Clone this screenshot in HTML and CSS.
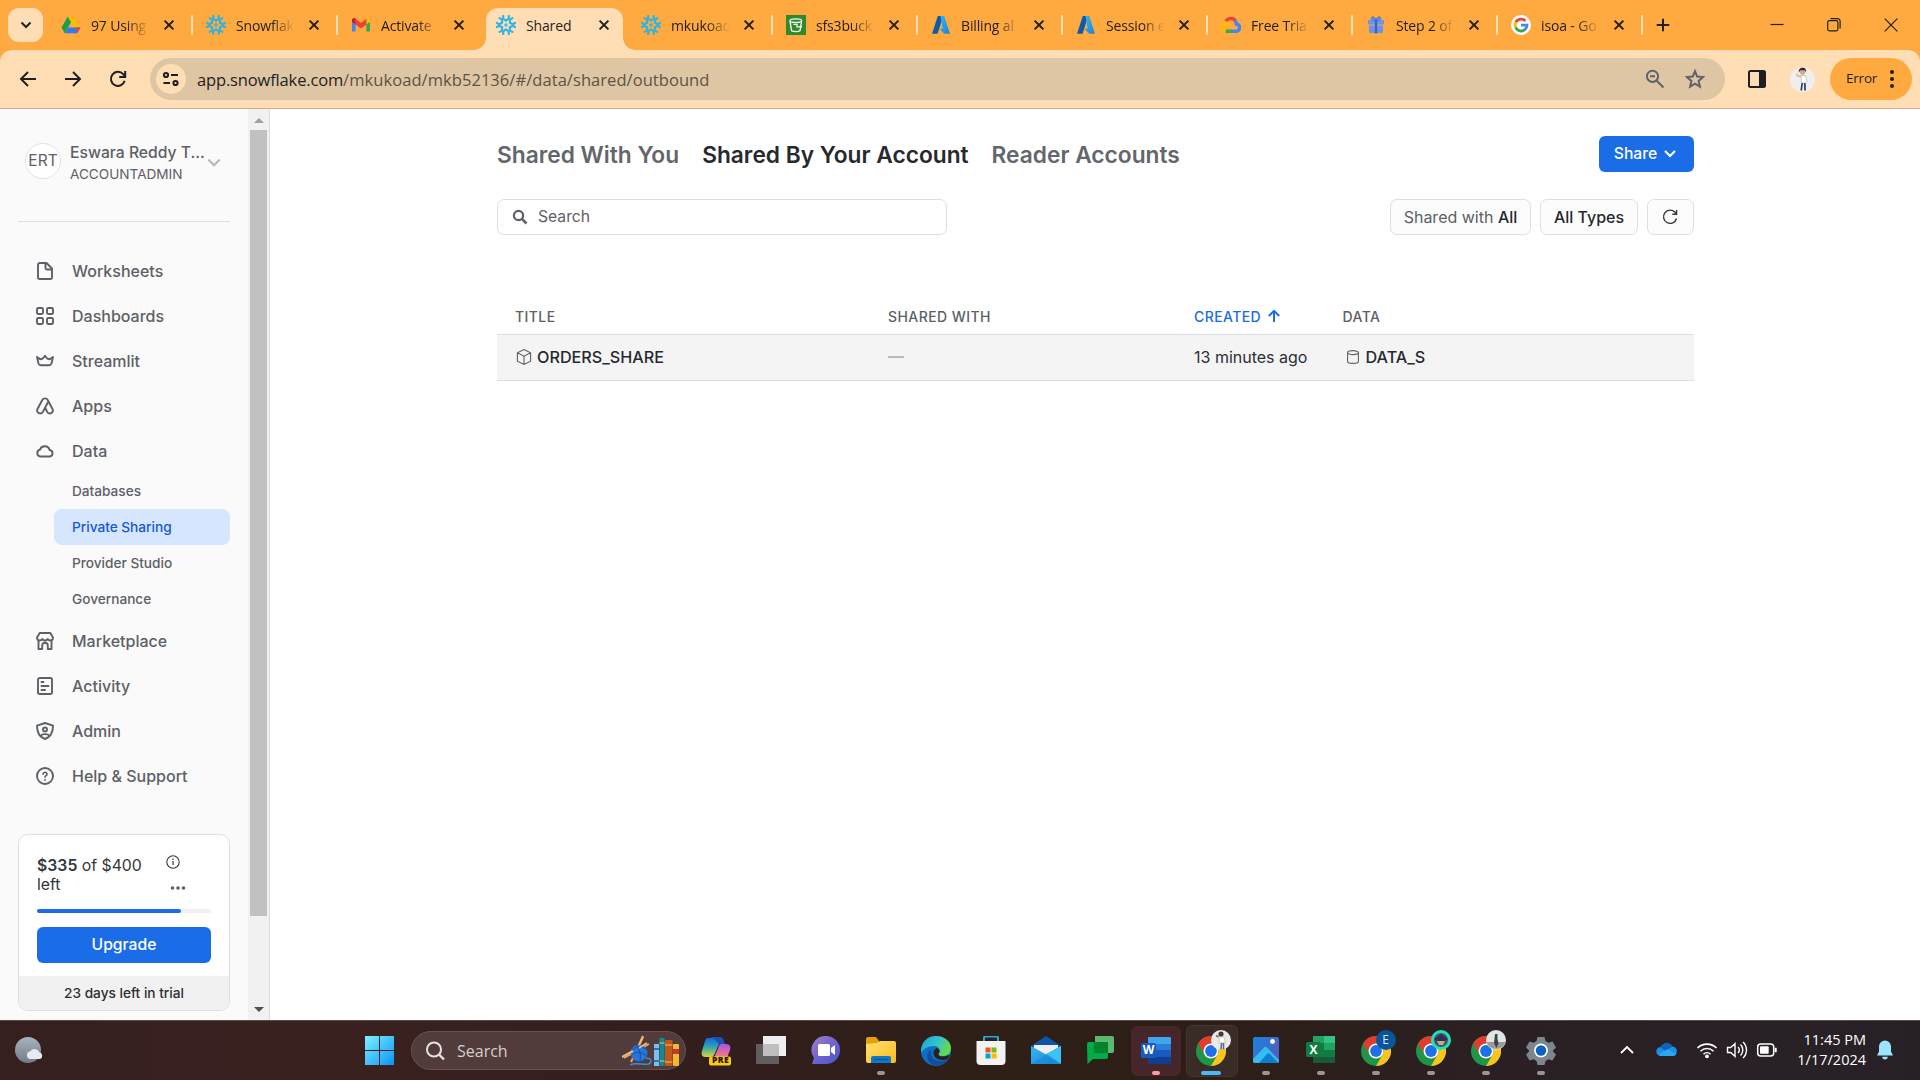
FILE: index.html
```html
<!DOCTYPE html>
<html lang="en">
<head>
<meta charset="utf-8">
<title>Shared</title>
<link rel="stylesheet" href="styles.css">
</head>
<body>
<svg class="sprite" width="0" height="0" aria-hidden="true">
  <defs>
    <linearGradient id="g-win" x1="0" y1="0" x2="1" y2="1"><stop offset="0" stop-color="#7df0ff"/><stop offset="1" stop-color="#0a95f5"/></linearGradient>
    <linearGradient id="g-chat" x1="0" y1="0" x2="1" y2="1"><stop offset="0" stop-color="#a57fc9"/><stop offset=".5" stop-color="#6f63cf"/><stop offset="1" stop-color="#4a52cf"/></linearGradient>
    <linearGradient id="g-fold" x1="0" y1="0" x2="1" y2="1"><stop offset="0" stop-color="#ffe072"/><stop offset="1" stop-color="#fcbc1c"/></linearGradient>
    <linearGradient id="g-edge" x1="0" y1="0" x2="1" y2=".4"><stop offset="0" stop-color="#1b9de2"/><stop offset=".6" stop-color="#34c6c8"/><stop offset="1" stop-color="#63dc4c"/></linearGradient>
    <linearGradient id="g-mail" x1="0" y1="0" x2="1" y2="1"><stop offset="0" stop-color="#34b5f0"/><stop offset="1" stop-color="#1b87d8"/></linearGradient>
    <linearGradient id="g-photo" x1="0" y1="0" x2="1" y2="1"><stop offset="0" stop-color="#1487e0"/><stop offset="1" stop-color="#6353b4"/></linearGradient>
    <linearGradient id="g-cop1" x1="0" y1="0" x2="0" y2="1"><stop offset="0" stop-color="#1469d8"/><stop offset=".45" stop-color="#28a5b4"/><stop offset="1" stop-color="#d9d43c"/></linearGradient>
    <linearGradient id="g-cop2" x1="0" y1="0" x2="0" y2="1"><stop offset="0" stop-color="#a953e8"/><stop offset="1" stop-color="#ff7d77"/></linearGradient>
    <linearGradient id="g-az" x1="0" y1="0" x2="1" y2="1"><stop offset="0" stop-color="#37b6f2"/><stop offset="1" stop-color="#1d83d6"/></linearGradient>
    <linearGradient id="g-moon" x1="0" y1="0" x2="0" y2="1"><stop offset="0" stop-color="#a9b3be"/><stop offset="1" stop-color="#727c88"/></linearGradient>
    <symbol id="flake" viewBox="0 0 20 20"><g stroke="#29b5e8" stroke-width="2.1" stroke-linecap="round" stroke-linejoin="round" fill="none"><path id="arm" d="M7.2 1v2.6L10 5.6l2.800-2V1"/><use href="#arm" transform="rotate(60 10 10)"/><use href="#arm" transform="rotate(120 10 10)"/><use href="#arm" transform="rotate(180 10 10)"/><use href="#arm" transform="rotate(240 10 10)"/><use href="#arm" transform="rotate(300 10 10)"/><circle cx="10" cy="10" r="1.1" stroke-width="1.2"/></g></symbol>
    <symbol id="azure" viewBox="0 0 20 20"><path d="M6.800 1h5.400L6.600 18.800H1z" fill="#0f5ba8"/><path d="M9.500 1h3.700L19 18.800h-5.600L8.400 14l3.200-.4z" fill="url(#g-az)"/></symbol>
    <symbol id="x" viewBox="0 0 16 16"><path d="M3.600 3.600l8.800 8.800M12.400 3.600l-8.800 8.800" stroke="#1f1f1f" stroke-width="2" fill="none"/></symbol>
    <symbol id="chrome" viewBox="0 0 30 30"><circle cx="15" cy="15" r="15" fill="#1e9547"/><path d="M15 0a15 15 0 0 1 13 7.500H15a7.500 7.500 0 0 0-6.500 11.250L2 7.500A15 15 0 0 1 15 0z" fill="#e33b2e"/><path d="M28 7.500A15 15 0 0 1 15 30l6.500-11.250A7.500 7.500 0 0 0 15 7.500z" fill="#fcc31d"/><circle cx="15" cy="15" r="7.500" fill="#fff"/><circle cx="15" cy="15" r="5.900" fill="#1f6fe6"/></symbol>
  </defs>
</svg>

<div class="browser">
  <header class="tabstrip">
    <button class="tab-search"><svg width="16" height="16" viewBox="0 0 16 16"><path d="M3.500 5.500L8 10l4.500-4.500" class="ink2"/></svg></button>
    <div class="tabs">
      <div class="tab"><svg class="fav" viewBox="0 0 20 20"><path d="M6.700 1.500h6.600L19.500 12.500H13z" fill="#fbbc04"/><path d="M6.700 1.500L10 7.200 3.700 18.200.5 12.500z" fill="#1e9e4a"/><path d="M7 12.500h12.500l-3.300 5.700H3.700z" fill="#2f7cf0"/><path d="M14 12.500h5.500l-3 5.200z" fill="#ea4335"/></svg><span class="tt">97 Using</span><svg class="x"><use href="#x"/></svg></div>
      <div class="tab"><svg class="fav"><use href="#flake"/></svg><span class="tt">Snowflak</span><svg class="x"><use href="#x"/></svg></div>
      <div class="tab nodiv"><svg class="fav" viewBox="0 0 20 20"><path d="M1 5v11.500h3.600V8z" fill="#4285f4"/><path d="M19 5v11.500h-3.600V8z" fill="#34a853"/><path d="M15.400 5v4.500L19 7V5c0-2-2-2.600-3.600-1.500z" fill="#fbbc04"/><path d="M4.600 9.500V3.800L10 8l5.400-4.200v5.700L10 13.600z" fill="#ea4335"/><path d="M1 5v2l3.600 2.500V3.600C3 2.400 1 3.300 1 5z" fill="#c5221f"/></svg><span class="tt">Activate</span><svg class="x"><use href="#x"/></svg></div>
      <div class="tab active nodiv"><svg class="fav"><use href="#flake"/></svg><span class="tt">Shared</span><svg class="x"><use href="#x"/></svg></div>
      <div class="tab"><svg class="fav"><use href="#flake"/></svg><span class="tt">mkukoad</span><svg class="x"><use href="#x"/></svg></div>
      <div class="tab"><svg class="fav" viewBox="0 0 20 20"><path d="M0 0h20v20H0z" fill="#2f8a2b"/><path d="M4 6.200l1.600 9.600c2 1.200 6.400 1.200 8.400 0L15.600 6.200" fill="none" stroke="#fff" stroke-width="1.300"/><ellipse cx="9.800" cy="5.700" rx="5.900" ry="1.800" fill="none" stroke="#fff" stroke-width="1.300"/><path d="M7.500 9.300h3.500v2.500h5" fill="none" stroke="#fff" stroke-width="1.200"/></svg><span class="tt">sfs3buck</span><svg class="x"><use href="#x"/></svg></div>
      <div class="tab"><svg class="fav"><use href="#azure"/></svg><span class="tt">Billing al</span><svg class="x"><use href="#x"/></svg></div>
      <div class="tab"><svg class="fav"><use href="#azure"/></svg><span class="tt">Session e</span><svg class="x"><use href="#x"/></svg></div>
      <div class="tab"><svg class="fav" viewBox="0 0 20 20"><g fill="none" stroke-width="3.400"><path d="M5 6.500A5.400 5.400 0 0 1 14.500 6" stroke="#ea4335"/><path d="M14 5.800c1 1 1.300 2 1.300 3.200a3.700 3.700 0 0 1 .2 7.300H10" stroke="#4285f4"/><path d="M10.500 16.300H5.500l-1.500-.5" stroke="#34a853"/><path d="M4.800 16.200A3.900 3.900 0 1 1 8.300 10.500" stroke="#fbbc04"/></g></svg><span class="tt">Free Tria</span><svg class="x"><use href="#x"/></svg></div>
      <div class="tab"><svg class="fav" viewBox="0 0 20 20"><path d="M2 5h16v4.500H2zM3 10.500h14V18H3z" fill="#6b94ea"/><path d="M8.800 4h2.400v14.500H8.800z" fill="#3a63c8"/><path d="M10 5C6 5.500 4.500 4 5.500 2.500S9 2 10 5c1-3 3.500-4 4.500-2.500S14 5.500 10 5z" fill="#6b94ea" stroke="#3a63c8" stroke-width=".8"/></svg><span class="tt">Step 2 of</span><svg class="x"><use href="#x"/></svg></div>
      <div class="tab"><svg class="fav" viewBox="0 0 20 20"><circle cx="10" cy="10" r="10" fill="#fff"/><g fill="none" stroke-width="2.800"><path d="M14.400 6A6 6 0 0 0 4.800 7.200" stroke="#ea4335"/><path d="M4.900 7A6.200 6.200 0 0 0 4.900 13" stroke="#fbbc04"/><path d="M4.700 12.700A6 6 0 0 0 13.800 14.700" stroke="#34a853"/><path d="M10 10.100h6A6 6 0 0 1 13.700 14.800" stroke="#4285f4"/></g></svg><span class="tt">isoa - Go</span><svg class="x"><use href="#x"/></svg></div>
    </div>
    <svg class="newtab" width="16" height="16" viewBox="0 0 16 16"><path d="M8 1.700v12.600M1.700 8h12.600" class="ink2"/></svg>
    <div class="winctl">
      <svg width="14" height="14" viewBox="0 0 14 14"><path d="M.5 6.500h13" class="thin"/></svg>
      <svg width="14" height="14" viewBox="0 0 14 14"><rect x=".7" y="2.700" width="10.200" height="10.200" rx="1.800" class="thin"/><path d="M3.500.7h7a2.500 2.500 0 0 1 2.600 2.600v7.200" class="thin"/></svg>
      <svg width="14" height="14" viewBox="0 0 14 14"><path d="M.7.700l12.600 12.600M13.300.7L.7 13.300" class="thin"/></svg>
    </div>
  </header>

  <div class="toolbar">
    <nav class="navbtns">
      <svg width="18" height="18" viewBox="0 0 18 18"><path d="M17 9H2.500M9 2L2 9l7 7" class="ink2"/></svg>
      <svg width="18" height="18" viewBox="0 0 18 18"><path d="M1 9h14.500M9 2l7 7-7 7" class="ink2"/></svg>
      <svg width="18" height="18" viewBox="0 0 18 18"><path d="M15.700 10.800A7 7 0 1 1 14.200 4.200L16 6M16.200 1v5.900h-6" class="ink2"/></svg>
    </nav>
    <div class="omnibox">
      <span class="siteinfo"><svg width="18" height="16" viewBox="0 0 18 16"><g class="ink2"><circle cx="4" cy="4" r="2.100"/><path d="M9 4h7M1.500 12H8"/><circle cx="13.500" cy="12" r="2.100"/></g></svg></span>
      <span class="url"><b>app.snowflake.com</b>/mkukoad/mkb52136/#/data/shared/outbound</span>
      <span class="omniacts">
        <svg width="20" height="20" viewBox="0 0 20 20"><g fill="none" stroke="#5f6368" stroke-width="2"><circle cx="7.500" cy="7.300" r="5.600"/><path d="M11.500 11.500l7 7M5 7.300h5"/></g></svg>
        <svg width="20" height="20" viewBox="0 0 20 20"><path d="M10 2.200l2.200 5.400 5.800.5-4.400 3.800 1.300 5.700-4.900-3-4.900 3 1.300-5.700L2 8.100l5.800-.5z" fill="none" stroke="#5f6368" stroke-width="2"/></svg>
      </span>
    </div>
    <svg class="sidepanel" width="18" height="18" viewBox="0 0 18 18"><rect x="1" y="1" width="16" height="16" rx="1.500" class="ink2"/><path d="M11 1h6v16h-6z" fill="#1f1f1f"/></svg>
    <svg class="profile" width="25" height="25" viewBox="0 0 25 25"><circle cx="12.500" cy="12.500" r="12.500" fill="#f1efee"/><circle cx="12.500" cy="5" r="2.800" fill="#d9a58a"/><path d="M8.800 5.500C8.500 2 10.500.7 12.500.7c3 0 4 2 3.300 4.500l-1-2-4.500 0z" fill="#3a2622"/><path d="M11 8.500h4.500l1.500 6.500-1.500 1h-4z" fill="#fff" stroke="#9ab5a0" stroke-width=".6"/><path d="M11 9.500L7.500 9 6.500 7" fill="none" stroke="#d9a58a" stroke-width="1.300"/><path d="M12.200 16l-1 7.500M14.800 16l.3 7.500" stroke="#25406b" stroke-width="1.700"/></svg>
    <button class="error"><span>Error</span><svg width="6" height="20" viewBox="0 0 6 20"><g fill="#1f1f1f"><circle cx="3" cy="3" r="2"/><circle cx="3" cy="10" r="2"/><circle cx="3" cy="17" r="2"/></g></svg></button>
  </div>

  <div class="page">
    <aside class="sidebar">
      <div class="user">
        <span class="avatar">ERT</span>
        <div class="who"><div class="name">Eswara Reddy T...</div><div class="role">ACCOUNTADMIN</div></div>
        <svg width="14" height="10" viewBox="0 0 14 10"><path d="M2 2.200l5 5 5-5" fill="none" stroke="#b5b8bd" stroke-width="2.200" stroke-linecap="round"/></svg>
      </div>
      <nav class="menu">
        <a><svg viewBox="0 0 18 18"><path d="M10.500 1H3.800A1.800 1.800 0 0 0 2 2.800v12.400A1.800 1.800 0 0 0 3.800 17h10.400a1.800 1.800 0 0 0 1.800-1.800V6.500zM9.500 1v5a1.500 1.500 0 0 0 1.500 1.500h5"/></svg><span>Worksheets</span></a>
        <a><svg viewBox="0 0 18 18"><rect x="1" y="1" width="6" height="6" rx="1.200"/><rect x="11" y="1" width="6" height="6" rx="1.200"/><rect x="1" y="11" width="6" height="6" rx="1.200"/><rect x="11" y="11" width="6" height="6" rx="1.200"/></svg><span>Dashboards</span></a>
        <a><svg viewBox="0 0 18 18"><path d="M1 5l3.200 2.300L6.800 6.500 9 3.800l2.200 2.700 2.600.8L17 5l-1.500 6.500a2.500 2.500 0 0 1-2.400 1.800H4.900a2.500 2.500 0 0 1-2.400-1.800z"/></svg><span>Streamlit</span></a>
        <a><svg viewBox="0 0 18 18"><path d="M9.200 10.500L7 14.700a3 3 0 0 1-2.600 1.800c-2.600 0-4-2.300-2.900-4.500l4.800-9a3.100 3.100 0 0 1 5.400 0l4.800 9c1.100 2.200-.3 4.500-2.900 4.500a3 3 0 0 1-2.600-1.800L9.200 10.500l2.600-5"/></svg><span>Apps</span></a>
        <a><svg viewBox="0 0 18 18"><path d="M4.500 14.500A3.500 3.500 0 0 1 4 7.600a5 5 0 0 1 9.600.4 3.300 3.300 0 0 1 .4 6.500z"/></svg><span>Data</span></a>
        <div class="sub">
          <a>Databases</a><a class="on">Private Sharing</a><a>Provider Studio</a><a>Governance</a>
        </div>
        <a><svg viewBox="0 0 18 18"><path d="M3.700 1h10.600L17 5.500c0 2-1 3-2.600 3S12 7.500 11.700 7c-.5 1-1.400 1.500-2.700 1.500S6.800 8 6.300 7C6 7.500 5.200 8.500 3.600 8.500S1 7.500 1 5.500zM2.500 8.500V17h3.700v-3.500a2.800 2.800 0 0 1 5.600 0V17h3.700V8.500"/></svg><span>Marketplace</span></a>
        <a><svg viewBox="0 0 18 18"><rect x="2" y="1" width="14" height="16" rx="1.800"/><path d="M5.500 5h2M5.500 9h7M5.500 13h3.500"/></svg><span>Activity</span></a>
        <a><svg viewBox="0 0 18 18"><path d="M9 1l8 2.700c0 6-1.500 11-8 13.300C2.500 14.700 1 9.700 1 3.700z"/><circle cx="9" cy="7.500" r="2"/><path d="M4.500 14c1.500-2.500 7.500-2.500 9 0"/></svg><span>Admin</span></a>
        <a><svg viewBox="0 0 18 18"><circle cx="9" cy="9" r="8"/><path d="M7 7.300c0-2.700 4.200-2.600 4 0-.2 1.400-2 1.300-2 3M9 12.600v.6" stroke-width="1.600"/></svg><span>Help &amp; Support</span></a>
      </nav>
      <section class="trial">
        <div class="trial-body">
          <div class="credit">
            <p><b>$335</b> of $400<br>left</p>
            <div class="credit-icons">
              <svg width="14" height="14" viewBox="0 0 14 14"><circle cx="7" cy="7" r="6.200" fill="none" stroke="#33363b" stroke-width="1.100"/><path d="M7 6v4M7 3.600v1.300" stroke="#33363b" stroke-width="1.200"/></svg>
              <svg class="dots" width="16" height="6" viewBox="0 0 16 6"><g fill="#5d6066"><circle cx="2.500" cy="3" r="1.800"/><circle cx="8" cy="3" r="1.800"/><circle cx="13.500" cy="3" r="1.800"/></g></svg>
            </div>
          </div>
          <div class="bar"><i></i></div>
          <button class="primary">Upgrade</button>
        </div>
        <footer>23 days left in trial</footer>
      </section>
    </aside>
    <div class="scroll"><i class="up"></i><i class="thumb"></i><i class="down"></i></div>

    <main class="main">
      <div class="titles">
        <h2>Shared With You</h2><h2 class="selected">Shared By Your Account</h2><h2>Reader Accounts</h2>
        <button class="primary share"><span>Share</span><svg width="14" height="10" viewBox="0 0 14 10"><path d="M2 2l5 5 5-5" fill="none" stroke="#fff" stroke-width="2.200"/></svg></button>
      </div>
      <div class="filters">
        <label class="search"><svg width="16" height="16" viewBox="0 0 16 16"><circle cx="6.500" cy="6.500" r="4.600" fill="none" stroke="#5d6066" stroke-width="2.200"/><path d="M9.700 9.700l4.800 4.800" stroke="#5d6066" stroke-width="2.600"/></svg><span>Search</span></label>
        <button class="f1"><span>Shared with <b>All</b></span></button>
        <button class="f2"><b>All Types</b></button>
        <button class="f3"><svg width="16" height="16" viewBox="0 0 16 16"><path d="M14.500 9.500A6.600 6.600 0 1 1 13 3.300l1.500 1.600M14.600 1v4.300h-4.300" fill="none" stroke="#33363b" stroke-width="1.400"/></svg></button>
      </div>
      <div class="table">
        <div class="row head"><span>TITLE</span><span>SHARED WITH</span><span class="sorted">CREATED<svg width="14" height="14" viewBox="0 0 14 14"><path d="M7 13V2.500M1.800 7L7 1.800 12.200 7" fill="none" stroke="#1a6ce7" stroke-width="2"/></svg></span><span>DATA</span></div>
        <div class="row data">
          <span class="cell"><svg width="18" height="18" viewBox="0 0 18 18"><path d="M9 1.500l6.600 3.300v8.400L9 16.500l-6.600-3.300V4.800zM2.400 4.800L9 8.200l6.600-3.400M9 8.200v8.300" fill="none" stroke="#5d6066" stroke-width="1.100"/></svg><b>ORDERS_SHARE</b></span>
          <span><i class="dash"></i></span>
          <span>13 minutes ago</span>
          <span class="cell db"><svg width="12" height="14" viewBox="0 0 12 14"><g fill="none" stroke="#5d6066" stroke-width="1.100"><path d="M.6 2.600v8.800C.6 14 11.400 14 11.400 11.400V2.600"/><ellipse cx="6" cy="2.600" rx="5.400" ry="2"/></g></svg><b>DATA_S</b></span>
        </div>
      </div>
    </main>
  </div>

  <footer class="taskbar">
    <svg class="weather" width="30" height="30" viewBox="0 0 30 30"><circle cx="14" cy="14" r="13" fill="url(#g-moon)"/><path d="M15.500 23a4 4 0 0 1 .8-7.700 5 5 0 0 1 9 1 3.500 3.500 0 0 1 .7 6.700z" fill="#e6eaee"/></svg>
    <svg class="start" width="29" height="29" viewBox="0 0 29 29"><path d="M0 0h14v14H0zM15 0h14v14H15zM0 15h14v14H0zM15 15h14v14H15z" fill="url(#g-win)"/></svg>
    <div class="tsearch">
      <svg width="20" height="20" viewBox="0 0 20 20"><circle cx="9" cy="8.500" r="7" fill="none" stroke="#e6e2e2" stroke-width="2"/><path d="M14 13.500l5 5" stroke="#e6e2e2" stroke-width="2.400"/></svg>
      <span>Search</span>
      <svg class="art" width="58" height="32" viewBox="0 0 58 32"><path d="M9 27L21 2M2 23L27 9" stroke="#e8a45e" stroke-width="2"/><circle cx="17" cy="18" r="8.500" fill="#2477d8"/><path d="M10 15c4-4 10-4 15 0M9.500 20c5-4 11-3 15 1M14 10c4 4 5 10 4 16" stroke="#1450a8" fill="none"/><path d="M8 30c6-4 21 3 21-4 0-2-2-3-5-2.500" fill="none" stroke="#3a8de8" stroke-width="1.500"/><path d="M0 22l11-6M21 1l-4 9M25 8l-8 5" stroke="#f0b878" stroke-width="2"/><rect x="32" y="9" width="5" height="22" fill="#7fbdee"/><rect x="37.500" y="3" width="5" height="28" fill="#118a96"/><rect x="43" y="5" width="7.500" height="26" rx="1" fill="#c2571b"/><rect x="51" y="9" width="6" height="22" rx="1" fill="#f2b92e"/><path d="M32 14h5M32 26h5" stroke="#3870b8" stroke-width="2"/><path d="M37.500 8h5M37.500 26h5M43 10h7.500M43 27h7.500" stroke="#e9c565"/><path d="M51 14h6v5h-6z" fill="#d0312d"/></svg>
    </div>
    <div class="apps">
      <div class="app"><svg viewBox="0 0 30 30"><path d="M7 2h10c3 0 4 2 5 6h-4l-4 9c-1 3-3 4-5 4H4c-3 0-4-3-3-6L4 5c.6-2 1.600-3 3-3z" fill="url(#g-cop1)"/><path d="M9 1h10c3 0 3.500 3 5 7h-6c-2-2-5-6-9-7z" fill="#1c50bd"/><path d="M21 8h4c4 0 5 3 4 6l-3 8H13l5-12c.4-1.600 1-2 3-2z" fill="url(#g-cop2)"/><rect x="8" y="20.500" width="22" height="9" rx="2" fill="#ffc90e"/></svg><em>PRE</em></div>
      <div class="app"><svg viewBox="0 0 30 30"><path d="M0 8h23v20H0z" fill="#5f5f5f"/><path d="M7 0h23v20H7z" fill="#eeeeee"/><path d="M7 8h16v12H7z" fill="#c0bebe"/></svg></div>
      <div class="app"><svg viewBox="0 0 30 30"><path d="M15 0a14 14 0 0 1 0 28H1l2-6A14 14 0 0 1 15 0z" fill="url(#g-chat)"/><rect x="7" y="8" width="12" height="12" rx="1.500" fill="#fff"/><path d="M20 12l4-3v10l-4-3z" fill="#fff"/></svg></div>
      <div class="app run"><svg viewBox="0 0 30 30"><path d="M0 3a2 2 0 0 1 2-2h8l3 4v6H0z" fill="#e3a008"/><path d="M0 8l11-1 3-2h14a2 2 0 0 1 2 2v18a2 2 0 0 1-2 2H2a2 2 0 0 1-2-2z" fill="url(#g-fold)"/><path d="M5 27v-5a2 2 0 0 1 2-2h16a2 2 0 0 1 2 2v5z" fill="#0f78c8"/><path d="M8 23.500h14" stroke="#0a4f92" stroke-width="1.200"/></svg></div>
      <div class="app"><svg viewBox="0 0 30 30"><circle cx="15" cy="15" r="15" fill="#0c6fc4"/><path d="M0 14C1 5 7 0 15 0c9 0 15 6 15 12 0 5-3 8-8 8-4 0-5-1-4-3 2-3 0-7-5-7C7 10 2 13 0 17z" fill="url(#g-edge)"/><path d="M10 14c-1 9 6 14 17 9.500C23 30 15 31.500 9 27c-5-5-2-12 1-13z" fill="#114f9e"/><path d="M15 12c3 0 4.500 3 3 5s.5 4 5 3.500l6-1.500-2 4c-7 2.500-14 0-14.500-6 0-2 1-4 2.500-4z" fill="#2f1f17"/></svg></div>
      <div class="app"><svg viewBox="0 0 30 30"><path d="M8 6V2a1.500 1.500 0 0 1 1.500-1.500h11A1.500 1.500 0 0 1 22 2v4" fill="none" stroke="#2aa6e4" stroke-width="2"/><path d="M.5 5h29v20a4 4 0 0 1-4 4h-21a4 4 0 0 1-4-4z" fill="#f2f2f2"/><path d="M9.500 11.500h5v5h-5z" fill="#f25022"/><path d="M15.500 11.500h5v5h-5z" fill="#7fba00"/><path d="M9.500 17.500h5v5h-5z" fill="#00a4ef"/><path d="M15.500 17.500h5v5h-5z" fill="#ffb900"/></svg></div>
      <div class="app"><svg viewBox="0 0 30 30"><path d="M0 10L15 0l15 10v4H0z" fill="#0c55a8"/><path d="M3 9h24v10H3z" fill="#f0eef0"/><path d="M0 10l15 8.500L30 10v18H0z" fill="url(#g-mail)"/><path d="M30 10v18L14 18.500z" fill="#3cc3f5"/><path d="M0 28h30L16 18z" fill="#1a86d6" opacity=".6"/></svg></div>
      <div class="app"><svg viewBox="0 0 30 30"><path d="M9 0h17a2 2 0 0 1 2 2v13a2 2 0 0 1-2 2H9z" fill="#5bb872"/><path d="M1 8a2 2 0 0 1 2-2h19v15a2 2 0 0 1-2 2H7l-5.500 5z" fill="#00ac47"/><path d="M8 6h14v11H9a1 1 0 0 1-1-1z" fill="#00832d"/></svg></div>
      <div class="app word run"><svg viewBox="0 0 30 30"><path d="M8 1h21a1 1 0 0 1 1 1v6H7V2a1 1 0 0 1 1-1z" fill="#41a5ee"/><path d="M7 8h23v6H7z" fill="#2b7cd3"/><path d="M7 14h23v7H7z" fill="#185abd"/><path d="M7 21h23v6a1 1 0 0 1-1 1H8a1 1 0 0 1-1-1z" fill="#103f91"/><rect x="0" y="7" width="15" height="15" rx="1.500" fill="#185abd"/></svg><em>W</em></div>
      <div class="app focus"><svg viewBox="0 0 30 30"><use href="#chrome"/></svg><i class="badge"><svg viewBox="0 0 20 20"><circle cx="10" cy="10" r="10" fill="#ebe8e6"/><circle cx="10" cy="4" r="2.600" fill="#4b352c"/><path d="M8 7h5l1.500 6h-6z" fill="#fff" stroke="#a3b29a" stroke-width=".6"/><path d="M7.500 7L5 5.500M10.500 13l-.5 6.500M12.500 13v6.500" stroke="#56688a" stroke-width="1.500"/></svg></i></div>
      <div class="app run"><svg viewBox="0 0 30 30"><rect x="2" y="1" width="26" height="26" rx="2" fill="url(#g-photo)"/><path d="M2 23L13 11.500a2 2 0 0 1 3 0L28 24v1a2 2 0 0 1-2 2H4a2 2 0 0 1-2-2z" fill="#31bdf1"/><path d="M8 27l8-9a2 2 0 0 1 3 0l8 8.500-1 .5z" fill="#0c80cf"/><circle cx="21.500" cy="5.500" r="2.400" fill="#fff"/></svg></div>
      <div class="app excel run"><svg viewBox="0 0 30 30"><path d="M7 0h22v7H7z" fill="#21a366"/><path d="M18 0h11v7H18z" fill="#33c481"/><path d="M7 7h11v7H7zM7 14h11v7H7z" fill="#107c41"/><path d="M18 7h11v7H18z" fill="#21a366"/><path d="M18 14h11v7H18z" fill="#107c41"/><path d="M7 21h22v6H7z" fill="#185c37"/><rect x="0" y="6" width="15" height="15" rx="1.500" fill="#107c41"/></svg><em>X</em></div>
      <div class="app run"><svg viewBox="0 0 30 30"><use href="#chrome"/></svg><i class="badge letter">E</i></div>
      <div class="app run"><svg viewBox="0 0 30 30"><use href="#chrome"/></svg><i class="badge"><svg viewBox="0 0 20 20"><circle cx="10" cy="10" r="10" fill="#1fe0bd"/><circle cx="10" cy="10" r="7" fill="#48555f"/><path d="M3 9l7-5 7 5-3 2H6z" fill="#2c3157"/><path d="M6 11h8l-2 4H8z" fill="#c1ad86"/></svg></i></div>
      <div class="app run"><svg viewBox="0 0 30 30"><use href="#chrome"/></svg><i class="badge"><svg viewBox="0 0 20 20"><circle cx="10" cy="10" r="10" fill="#dfe6e6"/><path d="M.5 12h19a10 10 0 0 1-19 0z" fill="#9b9a94"/><path d="M9 4h2.500v5l1 4-2 5-2.500-5z" fill="#3d4349"/></svg></i></div>
      <div class="app run"><svg viewBox="0 0 30 30"><path d="M11.500 1h7l1 4 3 1.700 4-1.200L30 11.500 27 14.500v1L30 18.500l-3.500 6-4-1.200-3 1.700-1 4h-7l-1-4-3-1.700-4 1.200L0 18.500l3-3v-1l-3-3 3.500-6 4 1.200 3-1.700z" fill="#7d858e"/><circle cx="15" cy="14.500" r="6.900" fill="#fff"/><circle cx="15" cy="14.500" r="5.200" fill="#0c64b8"/></svg></div>
    </div>
    <div class="tray">
      <svg width="16" height="10" viewBox="0 0 16 10"><path d="M2 8l6-6 6 6" fill="none" stroke="#fff" stroke-width="1.800"/></svg>
      <svg class="cloud" width="22" height="14" viewBox="0 0 22 14"><path d="M5 13A4.500 4.500 0 0 1 4.500 4a7 7 0 0 1 12-.5A4.800 4.800 0 0 1 17 13z" fill="#1a8fe6"/><path d="M4.500 4a7 7 0 0 1 12-.5L9 8z" fill="#0c62bd"/><path d="M2 11.500L12 6l8 5a4 4 0 0 1-3 2H5a4 4 0 0 1-3-1.500z" fill="#2aa8f2"/></svg>
      <svg class="wifi" width="22" height="18" viewBox="0 0 22 18"><g fill="none" stroke="#fff" stroke-width="1.600"><path d="M1.500 7a13.500 13.500 0 0 1 19 0M4.500 10.200a9.200 9.200 0 0 1 13 0M7.500 13.200a5 5 0 0 1 7 0"/></g><circle cx="11" cy="15.300" r="1.900" fill="#fff"/></svg>
      <svg width="22" height="18" viewBox="0 0 22 18"><g fill="none" stroke="#fff" stroke-width="1.400"><path d="M1.500 6.500h3.200L9 2.500v13l-4.300-4H1.500zM12 6a4 4 0 0 1 0 6M14.500 3.500a7.700 7.700 0 0 1 0 11M17 1a11 11 0 0 1 0 16"/></g></svg>
      <svg width="22" height="14" viewBox="0 0 22 14"><rect x="1.700" y="1" width="16" height="12" rx="3" fill="none" stroke="#fff" stroke-width="1.500"/><rect x="4" y="3.300" width="8.700" height="7.400" rx="1" fill="#fff"/><path d="M19.700 4.800v4.400" stroke="#fff" stroke-width="2"/></svg>
      <div class="clock"><span>11:45 PM</span><span>1/17/2024</span></div>
      <svg class="bell" width="18" height="20" viewBox="0 0 18 20"><path d="M9 .5a6 6 0 0 1 6 6v5l2 4H1l2-4v-5a6 6 0 0 1 6-6zM6.300 16.800h5.400a2.700 2.700 0 0 1-5.400 0z" fill="#9be4fb"/></svg>
    </div>
  </footer>
</div>
</body>
</html>
```
FILE: styles.css
```css
* { box-sizing: border-box; }
body { margin: 0; background: #fff; font-family: Inter, "Liberation Sans", sans-serif; color: #2b2e33; }
button { border: 0; padding: 0; margin: 0; font: inherit; color: inherit; background: none; display: flex; align-items: center; justify-content: center; }
p, h2 { margin: 0; }
svg { display: block; flex: none; }
.sprite { position: absolute; }
.ink2 { fill: none; stroke: #1f1f1f; stroke-width: 2; }
.thin { fill: none; stroke: #1f1f1f; stroke-width: 1.2; }
.browser { width: 1920px; height: 1080px; display: flex; flex-direction: column; overflow: hidden; background: #ffaa40; }

/* tab strip */
.tabstrip { height: 50px; display: flex; align-items: center; padding-left: 8px; font-family: "Open Sans", "Noto Sans", sans-serif; font-size: 14px; color: #1f1f1f; }
.tab-search { width: 35px; height: 34px; border-radius: 11px; background: #ffdeb5; margin-right: 5px; }
.tabs { display: flex; height: 50px; }
.tab { position: relative; width: 145px; display: flex; align-items: center; padding-left: 13px; }
.tab::after { content: ""; position: absolute; right: 0; top: 15px; width: 2px; height: 20px; border-radius: 1px; background: #ffdeb5; }
.tab.nodiv::after { display: none; }
.fav { width: 20px; height: 20px; }
.tt { width: 60px; margin: 0 10px 0 10px; letter-spacing: -.15px; white-space: nowrap; -webkit-mask-image: linear-gradient(90deg, #000 60%, transparent 98%); mask-image: linear-gradient(90deg, #000 60%, transparent 98%); }
.x { width: 16px; height: 16px; }
.active > * { z-index: 1; }
.active .tt { -webkit-mask-image: none; mask-image: none; }
.active::before { content: ""; position: absolute; left: 3px; right: 5px; top: 8px; bottom: 0; border-radius: 12px 12px 0 0; background: #ffdeb5; }
.tab.active::after { display: block; left: -9px; right: -7px; top: 38px; width: auto; height: 12px; border-radius: 0;
  background: radial-gradient(circle at 0 0, transparent 11.500px, #ffdeb5 12px) left / 12px 12px no-repeat, radial-gradient(circle at 100% 0, transparent 11.500px, #ffdeb5 12px) right / 12px 12px no-repeat; }
.newtab { margin-left: 12px; }
.winctl { margin-left: auto; display: flex; gap: 43px; padding-right: 22px; }

/* toolbar */
.toolbar { height: 59px; background: #ffdeb5; border-radius: 12px 12px 0 0; border-bottom: 1px solid #c9ad8c; display: flex; align-items: center; padding: 0 8px 0 19px; font-family: "Open Sans", "Noto Sans", sans-serif; color: #1f1f1f; }
.navbtns { display: flex; gap: 27px; margin-right: 23px; }
.omnibox { width: 1575px; height: 42px; border-radius: 21px; background: #dec5a3; display: flex; align-items: center; padding: 0 20px 0 6px; }
.siteinfo { width: 30px; height: 30px; border-radius: 50%; background: #ffdeb5; display: grid; place-items: center; margin-right: 11px; }
.url { font-size: 16.500px; letter-spacing: .06px; color: #5c5348; white-space: nowrap; }
.url b { font-weight: 400; letter-spacing: -.15px; color: #1f1f1f; }
.omniacts { margin-left: auto; display: flex; gap: 20px; }
.sidepanel { margin-left: 23px; }
.profile { margin-left: 24px; }
.error { width: 82px; height: 42px; border-radius: 21px; background: #ffaa40; margin-left: auto; font-size: 13.500px; letter-spacing: -.2px; gap: 12px; justify-content: flex-start; padding-left: 16px; }
.error span { width: 31px; padding-bottom: 2px; }

/* page */
.page { height: 911px; display: flex; background: #fff; }
.sidebar { width: 248px; background: #fafafa; padding: 0 18px; color: #5d6066; }
.user { height: 113px; border-bottom: 1px solid #dedfe1; display: flex; align-items: center; padding: 0 9px 9px 7px; }
.avatar { width: 36px; height: 36px; border: 1px solid #e2e2e3; border-radius: 50%; background: #fff; font-size: 15.500px; display: grid; place-items: center; margin-right: 9px; }
.who { white-space: nowrap; flex: 1; min-width: 0; padding-top: 5px; }
.name { font-size: 15.700px; font-weight: 500; line-height: 22px; }
.role { font-size: 13.600px; line-height: 21px; }
.user > svg { margin-top: 5px; }
.menu { padding-top: 26px; display: flex; flex-direction: column; font-size: 16px; font-weight: 500; }
.menu > a { height: 45px; display: flex; align-items: center; padding-left: 18px; gap: 18px; }
.menu svg { width: 18px; height: 18px; fill: none; stroke: #5d6066; stroke-width: 1.9; stroke-linejoin: round; stroke-linecap: round; }
.sub { margin: 0 0 1px 36px; display: flex; flex-direction: column; font-size: 13.650px; }
.sub a { height: 36px; border-radius: 8px; padding: 0 0 1px 18px; display: flex; align-items: center; }
.sub .on { background: #d6e6ff; color: #1458da; }
.trial { margin-top: 36px; height: 177px; border: 1px solid #dedfe1; border-radius: 10px; background: #fff; overflow: hidden; color: #33363b; }
.trial-body { height: 141px; padding: 21px 18px 0; }
.credit { display: flex; height: 53px; font-size: 15.800px; line-height: 19px; }
.credit p { width: 129px; }
.credit b { font-weight: 600; }
.credit-icons { display: flex; flex-direction: column; gap: 16px; margin-top: -1px; }
.dots { margin-left: 4px; }
.bar { height: 4px; border-radius: 2px; background: #f0f0f1; margin-bottom: 14px; }
.bar i { display: block; width: 144px; height: 4px; border-radius: 2px; background: #1a6ce7; }
.primary { background: #1a6ce7; color: #fff; border-radius: 6px; height: 36px; font-size: 15.700px; font-weight: 500; padding-bottom: 1px; }
.trial .primary { width: 174px; }
.trial footer { height: 34px; background: #f1f1f1; display: grid; place-items: center; font-size: 13.650px; font-weight: 500; color: #2b2e33; }
.scroll { width: 22px; background: #f1f1f1; border-right: 1px solid #dcdcdc; display: flex; flex-direction: column; align-items: center; }
.scroll i { display: block; }
.up { margin: 9px 0 7px; height: 5px; border: 5px solid transparent; border-top: 0; border-bottom-color: #a0a0a0; }
.thumb { width: 17px; height: 786px; background: #c1c1c1; }
.down { margin-top: 91px; border: 5px solid transparent; border-bottom: 0; border-top-color: #505050; }

.main { width: 1197px; margin-left: 227px; padding-top: 27px; }
.titles { display: flex; align-items: center; gap: 23px; height: 36px; }
h2 { font-size: 22.730px; font-weight: 600; color: #63666c; white-space: nowrap; }
h2.selected { color: #26292e; }
.share { width: 95px; margin-left: auto; gap: 6px; padding-right: 2px; }
.filters { display: flex; gap: 9px; margin-top: 27px; font-size: 16px; color: #5d6066; }
.filters > * { height: 36px; border: 1px solid #dedfe1; border-radius: 7px; white-space: nowrap; padding-bottom: 1px; }
.filters button { background: #fcfcfc; }
.filters b { font-weight: 500; color: #26292e; }
.search { width: 450px; margin-right: auto; display: flex; align-items: center; gap: 10px; padding-left: 14px; font-size: 15.700px; }
.f1 { width: 141px; }
.f2 { width: 98px; }
.f3 { width: 47px; padding-right: 2px; }
.table { margin-top: 65px; }
.row { display: grid; grid-template-columns: 373px 306px 148.500px 1fr; align-items: center; padding-left: 18px; border-bottom: 1px solid #dedfe1; }
.head { height: 35px; padding-bottom: 2px; font-size: 14px; font-weight: 500; color: #5d6066; letter-spacing: .42px; }
.sorted { display: flex; align-items: center; gap: 6px; color: #1a6ce7; }
.data { height: 46px; padding-bottom: 1px; background: #f4f4f4; font-size: 16px; }
.data b { font-weight: 500; font-size: 16.200px; color: #26292e; }
.cell { display: flex; align-items: center; gap: 4px; }
.db { padding-left: 4px; gap: 7px; }
.dash { display: block; width: 16px; height: 2px; background: #b8babd; }

/* taskbar */
.taskbar { height: 60px; border-top: 1px solid #5a4b4a; display: flex; align-items: center; background: linear-gradient(90deg, #35201f 0, #3a2120 18%, #321e1d 38%, #2e1f17 50%, #2d1f17 64%, #2a2023 78%, #272127 100%); color: #fff; font-family: "Open Sans", "Noto Sans", sans-serif; }
.weather { margin-left: 14px; }
.start { margin-left: 321px; }
.tsearch { width: 275px; height: 39px; border-radius: 20px; border: 1px solid #69514f; background: #513c3b; margin-left: 17px; display: flex; align-items: center; padding: 0 5px 0 13px; font-size: 16px; color: #d6cecd; }
.tsearch span { margin-left: 12px; }
.art { margin-left: auto; }
.apps { display: flex; margin-left: 2.500px; }
.app { position: relative; width: 55px; height: 50px; display: grid; place-items: center; }
.app > svg { width: 30px; height: 30px; }
.app em { position: absolute; font-style: normal; font-weight: 700; line-height: 1; }
.app:first-child em { left: 23.500px; top: 30.500px; font-size: 8.500px; color: #1b1b1b; font-weight: 800; letter-spacing: .5px; }
.word em, .excel em { left: 12.500px; width: 15px; text-align: center; font-size: 12px; top: 18.500px; }
.run::after, .focus::after { content: ""; position: absolute; bottom: 1px; left: 23.500px; width: 8px; height: 4px; border-radius: 2px; background: #9c9590; }
.word::after { background: #ff99a4; }
.focus::after { left: 17.500px; width: 20px; background: #4cb8f5; }
.word::before, .focus::before { content: ""; position: absolute; left: 2.500px; width: 50px; height: 50px; border-radius: 6px; background: #46262a; }
.focus::before { background: #392b25; border: 1px solid #43352f; }
.word > svg, .focus > svg { position: relative; }
.badge { position: absolute; left: 27px; top: 4px; width: 20px; height: 20px; border-radius: 50%; font-style: normal; }
.badge svg { width: 20px; height: 20px; }
.letter { background: #09549b; display: grid; place-items: center; font-size: 12px; color: #d5e6f5; }
.tray { margin-left: auto; display: flex; align-items: center; padding: 0 26px 1px 0; }
.cloud { margin-left: 21px; }
.wifi { margin: 0 8px 0 18px; }
.tray .wifi + svg { margin-right: 8px; }
.clock { width: 88px; display: flex; flex-direction: column; text-align: right; font-size: 14.500px; line-height: 20px; padding-bottom: 1px; }
.bell { margin-left: 10px; }
```
